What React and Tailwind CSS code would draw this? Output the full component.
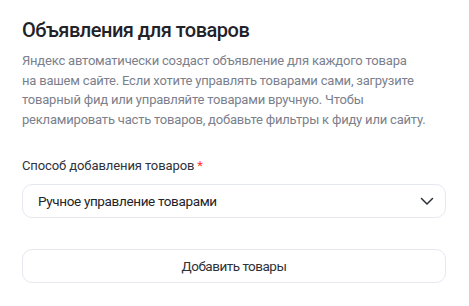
import React from "react";

export default function App() {
  return (
    <div className="w-[469px] h-[306px] bg-white px-[22px] pt-[16px]" style={{ fontFamily: "Roboto, 'Noto Sans', sans-serif" }}>
      <h1 className="text-[20px] leading-[28px] font-medium text-[#1f2329] tracking-[-0.5px]">Объявления для товаров</h1>
      <p className="mt-[7px] text-[13px] leading-[19.6px] text-[#7b808c] w-[420px] tracking-[-0.2px]">
        Яндекс автоматически создаст объявление для каждого товара<br />
        на вашем сайте. Если хотите управлять товарами сами, загрузите<br />
        товарный фид или управляйте товарами вручную. Чтобы<br />
        рекламировать часть товаров, добавьте фильтры к фиду или сайту.
      </p>
      <div className="mt-[28px] text-[13px] leading-[18px] text-[#2f3238] tracking-[-0.1px]">
        Способ добавления товаров<span className="text-[#f33] ml-[3px]">*</span>
      </div>
      <button className="mt-[9px] w-[424px] h-[34px] rounded-[10px] border border-[#e6e8f0] flex items-center justify-between pl-[15px] pr-[11px] text-[13.5px] tracking-[-0.35px] text-[#1f2329]">
        <span>Ручное управление товарами</span>
        <svg width="14" height="14" viewBox="0 0 14 14" fill="none">
          <path d="M1.5 4.5l5.5 5.5 5.5-5.5" stroke="#2b2f36" strokeWidth="1.5" strokeLinecap="round" strokeLinejoin="round" />
        </svg>
      </button>
      <button className="mt-[31px] w-[424px] h-[34px] rounded-[10px] border border-[#e6e8f0] flex items-center justify-center text-[13.5px] tracking-[-0.5px] text-[#2f3238]">
        Добавить товары
      </button>
    </div>
  );
}
